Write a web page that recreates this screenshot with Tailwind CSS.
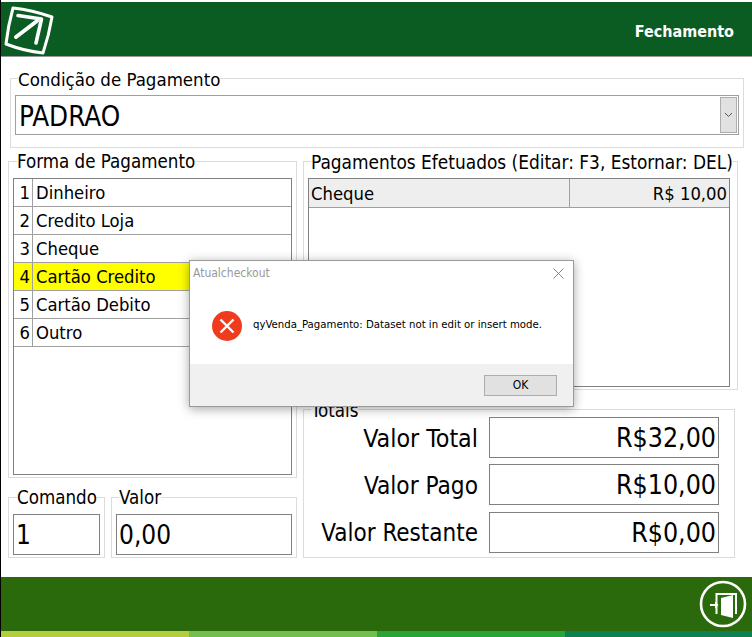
<!DOCTYPE html>
<html lang="pt">
<head>
    <meta charset="UTF-8">
    <title>Fechamento</title>
    <script src="https://cdn.jsdelivr.net/npm/@tailwindcss/browser@4"></script>
</head>
<body class="bg-white">
    <div class="relative w-[752px] h-[637px] overflow-hidden border-l border-black bg-white text-black font-['DejaVu_Sans_Condensed','DejaVu_Sans',sans-serif] flex flex-col">
        <!-- header -->
        <div class="mt-[2px] h-[55px] shrink-0 bg-[#0b5c23] border-b border-[#999] flex items-center justify-between pr-[18px]">
            <svg width="52" height="54" viewBox="0 0 52 54" class="ml-[1px]">
                <path d="M11 6 Q30 8 50 15 Q47 33 41 51 Q22 49 4 42 Q6 24 11 6 Z" fill="none" stroke="#fff" stroke-width="3" stroke-linejoin="round"/>
                <path d="M14 35 L35 19" stroke="#fff" stroke-width="4" stroke-linecap="round"/>
                <path d="M16 13.5 L39.5 17 L34 41" fill="none" stroke="#fff" stroke-width="3.6" stroke-linecap="round" stroke-linejoin="round"/>
            </svg>
            <span class="text-[16px] font-bold text-white mt-[5px]">Fechamento</span>
        </div>

        <div class="flex-1 relative">
            <!-- condicao -->
            <fieldset class="ml-[9px] mt-[9px] w-[734px] h-[82px] border border-[#dcdcdc] px-[4px]">
                <legend class="ml-[3px] text-[18.5px] pt-[3px] leading-[21px]">Condição de Pagamento</legend>
                <div class="mt-[5px] h-[40px] border border-[#a0a0a0] flex items-center justify-between pl-[3px] pr-[1px]">
                    <span class="text-[27.5px] leading-none mt-[3px]">PADRAO</span>
                    <div class="w-[17px] h-[36px] bg-[#e1e1e1] border border-[#adadad] flex items-center justify-center">
                        <svg width="9" height="6" viewBox="0 0 9 6"><path d="M1 1 L4.5 4.5 L8 1" fill="none" stroke="#555" stroke-width="1"/></svg>
                    </div>
                </div>
            </fieldset>

            <div class="flex ml-[7px] mt-[1px] gap-[6px]">
                <!-- coluna esquerda -->
                <div class="w-[289px]">
                    <fieldset class="h-[329px] border border-[#dcdcdc] px-[4px]">
                        <legend class="ml-[4px] text-[18.6px] pt-[2px] leading-[22px]">Forma de Pagamento</legend>
                        <div class="mt-[5px] h-[297px] border border-[#808080] text-[18.3px]">
                            <div class="h-[28px] border-b border-[#a0a0a0] flex">
                                <div class="w-[19px] border-r border-[#a0a0a0] text-right pr-[2px] leading-[28px]">1</div>
                                <div class="pl-[3px] leading-[28px]">Dinheiro</div>
                            </div>
                            <div class="h-[28px] border-b border-[#a0a0a0] flex">
                                <div class="w-[19px] border-r border-[#a0a0a0] text-right pr-[2px] leading-[28px]">2</div>
                                <div class="pl-[3px] leading-[28px]">Credito Loja</div>
                            </div>
                            <div class="h-[28px] border-b border-[#a0a0a0] flex">
                                <div class="w-[19px] border-r border-[#a0a0a0] text-right pr-[2px] leading-[28px]">3</div>
                                <div class="pl-[3px] leading-[28px]">Cheque</div>
                            </div>
                            <div class="h-[28px] border-b border-[#a0a0a0] flex bg-[#ffff00]">
                                <div class="w-[19px] border-r border-[#a0a0a0] text-right pr-[2px] leading-[28px]">4</div>
                                <div class="pl-[3px] leading-[28px]">Cartão Credito</div>
                            </div>
                            <div class="h-[28px] border-b border-[#a0a0a0] flex">
                                <div class="w-[19px] border-r border-[#a0a0a0] text-right pr-[2px] leading-[28px]">5</div>
                                <div class="pl-[3px] leading-[28px]">Cartão Debito</div>
                            </div>
                            <div class="h-[28px] border-b border-[#a0a0a0] flex">
                                <div class="w-[19px] border-r border-[#a0a0a0] text-right pr-[2px] leading-[28px]">6</div>
                                <div class="pl-[3px] leading-[28px]">Outro</div>
                            </div>
                        </div>
                    </fieldset>
                    <div class="flex gap-[6px] mt-[7px]">
                        <fieldset class="w-[96px] h-[73px] border border-[#dcdcdc] px-[4px]">
                            <legend class="ml-[4px] text-[18.6px] pt-[2px] leading-[22px]">Comando</legend>
                            <div class="mt-[5px] h-[41px] w-[87px] border border-[#808080] text-[26px] leading-[40px] pl-[2px]">1</div>
                        </fieldset>
                        <fieldset class="w-[186px] h-[73px] border border-[#dcdcdc] px-[4px]">
                            <legend class="ml-[3px] text-[18.6px] pt-[2px] leading-[22px]">Valor</legend>
                            <div class="mt-[5px] h-[41px] w-[176px] border border-[#808080] text-[26px] leading-[40px] pl-[2px]">0,00</div>
                        </fieldset>
                    </div>
                </div>

                <!-- coluna direita -->
                <div class="w-[432px]">
                    <fieldset class="h-[241px] border border-[#dcdcdc] px-[4px]">
                        <legend class="ml-[3px] text-[18.9px] pt-[2px] leading-[22px] whitespace-nowrap">Pagamentos Efetuados (Editar: F3, Estornar: DEL)</legend>
                        <div class="mt-[5px] h-[209px] w-[422px] border border-[#808080] text-[18.3px]">
                            <div class="h-[29px] bg-[#eeeeee] border-b border-[#a0a0a0] flex leading-[29px]">
                                <div class="w-[261px] border-r border-[#a0a0a0] pl-[2px]">Cheque</div>
                                <div class="flex-1 text-right pr-[2px]">R$ 10,00</div>
                            </div>
                        </div>
                    </fieldset>
                    <fieldset class="mt-[7px] h-[161px] border border-[#dcdcdc] px-[4px]">
                        <legend class="ml-[3px] text-[18.6px] pt-[4px] leading-[20px]">Totais</legend>
                        <div class="-mt-[4px] flex flex-col pr-[11px]">
                            <div class="flex items-center justify-end gap-[11px] h-[41px]">
                                <span class="text-[24.8px] mt-[3px]">Valor Total</span>
                                <div class="w-[230px] h-[41px] border border-[#808080] text-right text-[26.5px] leading-[40px] pr-[2px]">R$32,00</div>
                            </div>
                            <div class="flex items-center justify-end gap-[11px] h-[41px] mt-[6px]">
                                <span class="text-[24.2px] mt-[3px]">Valor Pago</span>
                                <div class="w-[230px] h-[41px] border border-[#808080] text-right text-[26.5px] leading-[40px] pr-[2px]">R$10,00</div>
                            </div>
                            <div class="flex items-center justify-end gap-[11px] h-[41px] mt-[7px]">
                                <span class="text-[24px]">Valor Restante</span>
                                <div class="w-[230px] h-[41px] border border-[#808080] text-right text-[26.5px] leading-[40px] pr-[2px]">R$0,00</div>
                            </div>
                        </div>
                    </fieldset>
                </div>
            </div>
        </div>

        <!-- rodape -->
        <div class="h-[54px] shrink-0 bg-[#2b6a0c] flex items-center justify-end pr-[5px]">
            <svg width="48" height="48" viewBox="0 0 48 48">
                <circle cx="24" cy="24" r="22" fill="none" stroke="#fff" stroke-width="2.6"/>
                <path d="M17.5 34 V14 H37 V34" fill="none" stroke="#fff" stroke-width="2"/>
                <path d="M22 18 L34 15 V38 L22 35 Z" fill="#fff"/>
                <path d="M11 25 H16" stroke="#fff" stroke-width="2"/>
                <path d="M16 21.5 L19.5 25 L16 28.5 Z" fill="#fff"/>
            </svg>
        </div>
        <div class="h-[6px] shrink-0 flex">
            <div class="w-[188px] bg-[#b5cc3e]"></div>
            <div class="w-[188px] bg-[#74bd4f]"></div>
            <div class="w-[188px] bg-[#2aa338]"></div>
            <div class="flex-1 bg-[#0f8052]"></div>
        </div>

        <!-- dialogo -->
        <div class="absolute left-[188px] top-[260px] w-[385px] h-[147px] bg-white border border-[#9a9a9a] shadow-[0_2px_10px_rgba(0,0,0,0.35)] flex flex-col font-['DejaVu_Sans_Condensed',sans-serif]">
            <div class="h-[24px] flex items-center justify-between pl-[3px] pr-[9px] text-[12px] text-[#999]">
                <span>Atualcheckout</span>
                <svg width="11" height="11" viewBox="0 0 11 11"><path d="M0.5 0.5 L10.5 10.5 M10.5 0.5 L0.5 10.5" stroke="#888" stroke-width="1"/></svg>
            </div>
            <div class="h-[79px] flex items-center gap-[11px] pl-[22px] pt-[2px]">
                <svg width="30" height="30" viewBox="0 0 30 30">
                    <circle cx="15" cy="15" r="15" fill="#f03c1e"/>
                    <path d="M8.5 8.5 L21.5 21.5 M21.5 8.5 L8.5 21.5" stroke="#fff" stroke-width="2.4"/>
                </svg>
                <span class="text-[11.3px]">qyVenda_Pagamento: Dataset not in edit or insert mode.</span>
            </div>
            <div class="flex-1 bg-[#f0f0f0] flex items-start justify-end pt-[11px] pr-[16px]">
                <div class="w-[73px] h-[21px] bg-[#e1e1e1] border border-[#adadad] text-[12px] text-center leading-[19px]">OK</div>
            </div>
        </div>
    </div>
</body>
</html>
